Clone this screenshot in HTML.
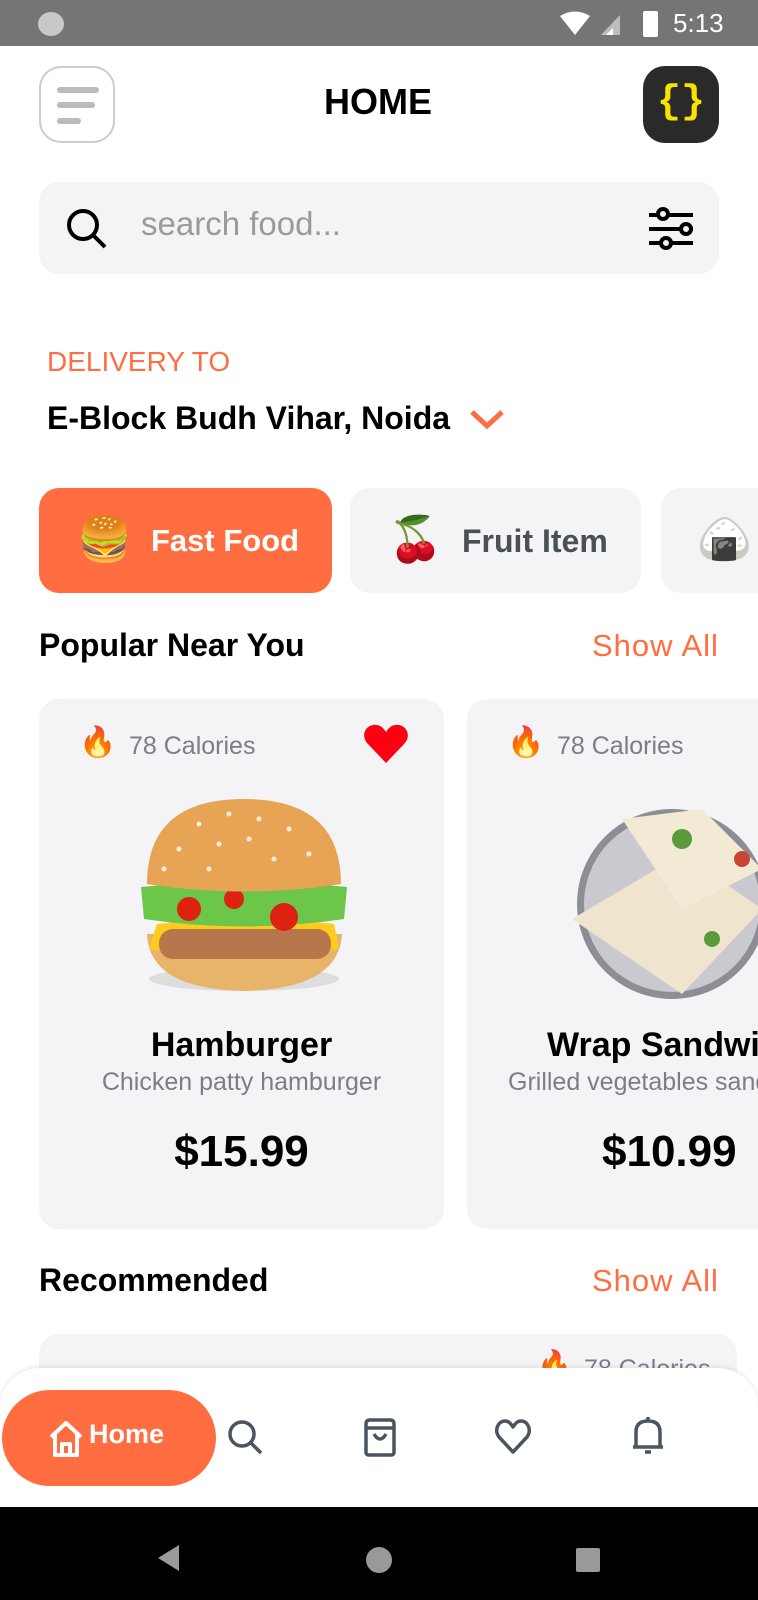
<!DOCTYPE html>
<html><head><meta charset="utf-8"><style>
*{margin:0;padding:0;box-sizing:border-box}
body{width:758px;height:1600px;position:relative;overflow:hidden;background:#fff;font-family:"Liberation Sans",sans-serif}
.abs{position:absolute}
.sb{left:0;top:0;width:758px;height:46px;background:#757575}
.card{background:#f4f4f6;border-radius:20px}
.t{white-space:nowrap}
</style></head><body>
<div class="abs sb">
  <div class="abs" style="left:38px;top:12px;width:26px;height:24px;border-radius:50%;background:#c8c8c8"></div>
  <svg class="abs" style="left:558px;top:11px" width="70" height="26"><path d="M2 5 Q17 -4 32 5 L17 24Z" fill="#fff"/><path d="M43 24 L62 4 L62 24Z" fill="#bdbdbd"/><path d="M48 24 L55 17 L55 24Z" fill="#fff"/></svg>
  <div class="abs" style="left:643px;top:11px;width:15px;height:26px;background:#fff;border-radius:2px"></div>
  <div class="abs t" style="left:673px;top:8px;color:#fff;font-size:26px">5:13</div>
</div>
<div class="abs" style="left:39px;top:66px;width:76px;height:77px;border:2px solid #ccc;border-radius:22px">
  <div class="abs" style="left:16px;top:19px;width:42px;height:6px;background:#bbb;border-radius:3px"></div>
  <div class="abs" style="left:16px;top:34px;width:38px;height:6px;background:#bbb;border-radius:3px"></div>
  <div class="abs" style="left:16px;top:50px;width:24px;height:6px;background:#bbb;border-radius:3px"></div>
</div>
<div class="abs t" style="left:324px;top:81px;font-size:36px;font-weight:bold;color:#000">HOME</div>
<div class="abs" style="left:643px;top:66px;width:76px;height:77px;background:#2a2a2a;border-radius:22px;color:#f5e400;font-size:40px;font-weight:bold;text-align:center;line-height:74px;font-family:'Liberation Mono',monospace">{}</div>
<div class="abs card" style="left:39px;top:182px;width:680px;height:92px">
  <svg class="abs" style="left:25px;top:24px" width="46" height="46"><circle cx="19" cy="19" r="14" stroke="#000" stroke-width="4" fill="none"/><path d="M29 29 L41 41" stroke="#000" stroke-width="4"/></svg>
  <div class="abs t" style="left:102px;top:23px;font-size:33px;color:#9a9a9a">search food...</div>
  <svg class="abs" style="left:608px;top:25px" width="50" height="44" fill="none" stroke="#000" stroke-width="4"><path d="M2 8H46M2 22H46M2 36H46"/><circle cx="16" cy="7" r="5" fill="#f4f4f6"/><circle cx="39" cy="22" r="5" fill="#f4f4f6"/><circle cx="19" cy="36" r="5" fill="#f4f4f6"/></svg>
</div>
<div class="abs t" style="left:47px;top:346px;font-size:28px;color:#ff6d40">DELIVERY TO</div>
<div class="abs t" style="left:47px;top:400px;font-size:32px;font-weight:bold;color:#000">E-Block Budh Vihar, Noida</div>
<svg class="abs" style="left:469px;top:408px" width="36" height="22"><path d="M3 4 L18 18 L33 4" stroke="#ff6d40" stroke-width="5" fill="none"/></svg>
<div class="abs" style="left:39px;top:488px;width:293px;height:105px;background:#ff6d40;border-radius:20px">
  <div class="abs" style="left:38px;top:26px;font-size:44px;line-height:52px">🍔</div>
  <div class="abs t" style="left:112px;top:35px;font-size:31px;font-weight:bold;color:#fff">Fast Food</div>
</div>
<div class="abs card" style="left:350px;top:488px;width:291px;height:105px">
  <div class="abs" style="left:38px;top:26px;font-size:44px;line-height:52px">🍒</div>
  <div class="abs t" style="left:112px;top:35px;font-size:32px;font-weight:bold;color:#4a5058">Fruit Item</div>
</div>
<div class="abs card" style="left:661px;top:488px;width:140px;height:105px">
  <div class="abs" style="left:36px;top:26px;font-size:44px;line-height:52px">🍙</div>
</div>
<div class="abs t" style="left:39px;top:627px;font-size:32px;font-weight:bold;color:#000">Popular Near You</div>
<div class="abs t" style="left:592px;top:628px;font-size:31px;letter-spacing:1px;color:#ff6d40">Show All</div>
<div class="abs card" style="left:39px;top:699px;width:405px;height:530px">
  <div class="abs" style="left:40px;top:26px;font-size:30px">🔥</div>
  <div class="abs t" style="left:90px;top:33px;font-size:25px;color:#7a7d8a">78 Calories</div>
  <svg class="abs" style="left:325px;top:25px" width="44" height="40"><path d="M22 39 L3 19 C-4 10 3 0 12 1 C17 1 20 5 22 8 C24 5 27 1 32 1 C41 0 48 10 41 19Z" fill="#f01"/></svg>
  <svg class="abs" style="left:100px;top:100px" width="210" height="196">
    <ellipse cx="105" cy="180" rx="95" ry="12" fill="#ddd"/>
    <path d="M8 135 Q10 190 105 192 Q200 190 203 135Z" fill="#e7b46a"/>
    <path d="M18 125 Q105 115 195 125 L200 150 Q105 160 10 150Z" fill="#ffcb1f"/>
    <rect x="20" y="130" width="172" height="30" rx="14" fill="#b7774a"/>
    <path d="M2 88 Q105 78 208 88 L205 120 Q105 135 5 120Z" fill="#6cc64a"/>
    <circle cx="50" cy="110" r="12" fill="#d21"/><circle cx="145" cy="118" r="14" fill="#d21"/><circle cx="95" cy="100" r="10" fill="#d21"/>
    <path d="M8 85 Q8 0 105 0 Q202 0 202 85 Q105 100 8 85Z" fill="#e8a455"/>
    <g fill="#fbeed8"><circle cx="60" cy="25" r="2.5"/><circle cx="90" cy="15" r="2.5"/><circle cx="120" cy="20" r="2.5"/><circle cx="150" cy="30" r="2.5"/><circle cx="40" cy="50" r="2.5"/><circle cx="80" cy="45" r="2.5"/><circle cx="110" cy="40" r="2.5"/><circle cx="170" cy="55" r="2.5"/><circle cx="135" cy="60" r="2.5"/><circle cx="25" cy="70" r="2.5"/><circle cx="70" cy="70" r="2.5"/></g>
  </svg>
  <div class="abs t" style="left:0;width:405px;text-align:center;top:327px;font-size:34px;font-weight:bold;color:#000">Hamburger</div>
  <div class="abs t" style="left:0;width:405px;text-align:center;top:369px;font-size:25px;color:#7a7d8a">Chicken patty hamburger</div>
  <div class="abs t" style="left:0;width:405px;text-align:center;top:428px;font-size:44px;font-weight:bold;color:#000">$15.99</div>
</div>
<div class="abs card" style="left:467px;top:699px;width:405px;height:530px">
  <div class="abs" style="left:40px;top:26px;font-size:30px">🔥</div>
  <div class="abs t" style="left:90px;top:33px;font-size:25px;color:#7a7d8a">78 Calories</div>
  <svg class="abs" style="left:95px;top:100px" width="200" height="200">
    <circle cx="110" cy="105" r="95" fill="#8d8d95"/><circle cx="110" cy="105" r="88" fill="#c9c9cf"/>
    <path d="M10 120 L120 55 L200 110 L120 195Z" fill="#efe5cf"/>
    <path d="M60 20 L140 10 L200 70 L120 110Z" fill="#f3ead5"/>
    <circle cx="120" cy="40" r="10" fill="#5a9a3a"/><circle cx="180" cy="60" r="8" fill="#c43"/><circle cx="150" cy="140" r="8" fill="#5a9a3a"/>
  </svg>
  <div class="abs t" style="left:80px;top:327px;font-size:34px;font-weight:bold;color:#000">Wrap Sandwich</div>
  <div class="abs t" style="left:41px;top:369px;font-size:25px;color:#7a7d8a">Grilled vegetables sandwich</div>
  <div class="abs t" style="left:135px;top:428px;font-size:44px;font-weight:bold;color:#000">$10.99</div>
</div>
<div class="abs t" style="left:39px;top:1262px;font-size:32px;font-weight:bold;color:#000">Recommended</div>
<div class="abs t" style="left:592px;top:1263px;font-size:31px;letter-spacing:1px;color:#ff6d40">Show All</div>
<div class="abs card" style="left:39px;top:1334px;width:698px;height:120px">
  <div class="abs" style="left:498px;top:14px;font-size:28px">🔥</div>
  <div class="abs t" style="left:545px;top:21px;font-size:25px;color:#7a7d8a">78 Calories</div>
</div>
<div class="abs" style="left:0;top:1368px;width:758px;height:140px;background:#fff;border-radius:40px 40px 0 0;box-shadow:0 -2px 4px rgba(0,0,0,.08)"></div>
<div class="abs" style="left:2px;top:1390px;width:214px;height:96px;background:#ff6d40;border-radius:48px">
  <svg class="abs" style="left:46px;top:30px" width="36" height="38" fill="none" stroke="#fff" stroke-width="4" stroke-linejoin="round"><path d="M3 17 L18 3 L33 17 M7 14 V35 H29 V14 M14 35 V24 H22 V35"/></svg>
  <div class="abs t" style="left:87px;top:29px;font-size:27px;font-weight:bold;color:#fff">Home</div>
</div>
<svg class="abs" style="left:226px;top:1418px" width="40" height="40" fill="none" stroke="#4a5560" stroke-width="3.5"><circle cx="16" cy="16" r="12"/><path d="M25 25 L35 35"/></svg>
<svg class="abs" style="left:362px;top:1418px" width="36" height="40" fill="none" stroke="#4a5560" stroke-width="3.5" stroke-linejoin="round"><path d="M4 6 Q4 2 8 2 H28 Q32 2 32 6 V34 Q32 37 29 37 H7 Q4 37 4 34Z M4 10 H32 M12 16 Q18 26 24 16"/></svg>
<svg class="abs" style="left:494px;top:1418px" width="38" height="38" fill="none" stroke="#4a5560" stroke-width="3.5" stroke-linejoin="round"><path d="M19 34 L5 19 C0 12 4 3 11 3 C15 3 17 6 19 9 C21 6 23 3 27 3 C34 3 38 12 33 19Z"/></svg>
<svg class="abs" style="left:630px;top:1414px" width="36" height="44" fill="none" stroke="#4a5560" stroke-width="3.5" stroke-linejoin="round"><path d="M18 3 V6 M6 33 V18 Q6 7 18 7 Q30 7 30 18 V33 Z M3 33 H33 M15 38 H21"/></svg>
<div class="abs" style="left:0;top:1507px;width:758px;height:93px;background:#000">
  <svg class="abs" style="left:155px;top:36px" width="28" height="30"><path d="M24 2 V28 L3 15Z" fill="#999"/></svg>
  <div class="abs" style="left:366px;top:40px;width:26px;height:26px;border-radius:50%;background:#999"></div>
  <div class="abs" style="left:576px;top:41px;width:24px;height:24px;border-radius:2px;background:#999"></div>
</div>
</body></html>
